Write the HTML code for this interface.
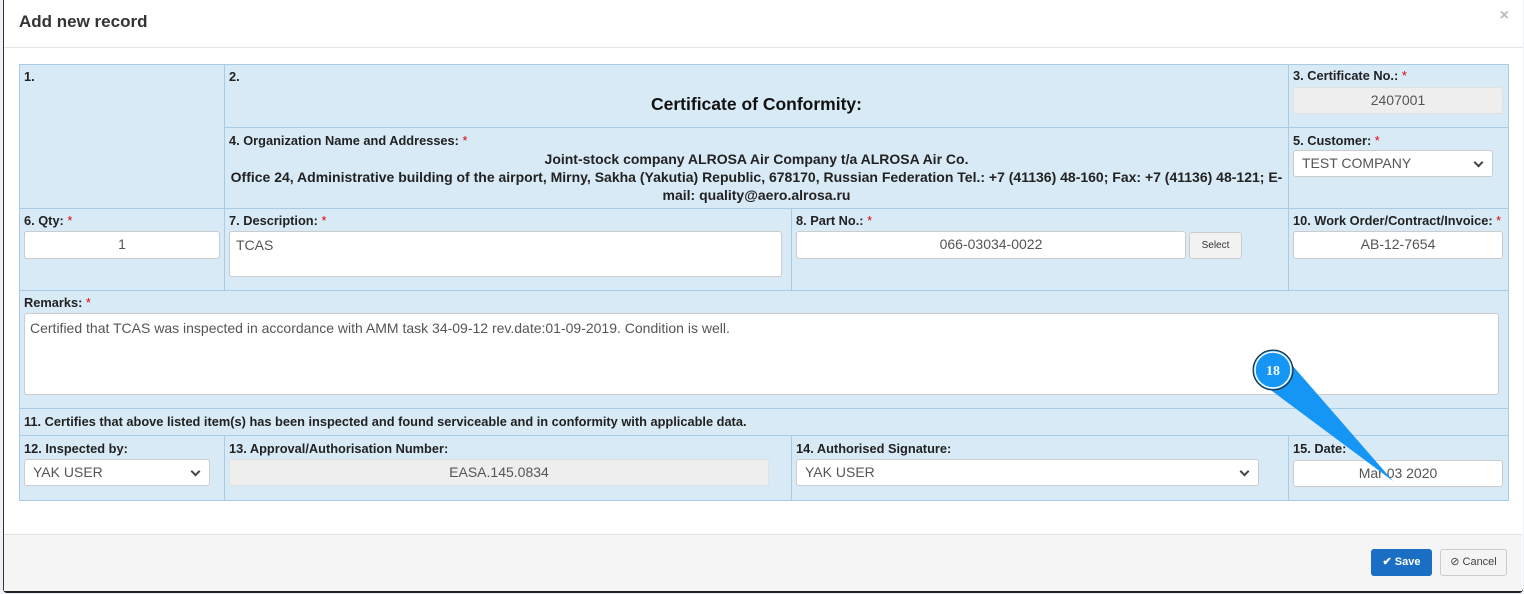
<!DOCTYPE html><html><head><style>
body{margin:0;width:1524px;height:594px;background:#eef1f5;font-family:"Liberation Sans",sans-serif;position:relative;overflow:hidden}
.m{position:absolute;left:3px;top:0;width:1519px;height:591px;background:#fff;border-left:1px solid #333;border-bottom:2px solid #222;border-radius:0 0 4px 4px}
.a{position:absolute}
.c{position:absolute;background:#d9eaf7;border:1px solid #a8cbe6;box-sizing:border-box}
.l{position:absolute;font-size:12.8px;font-weight:bold;color:#222}
.r{color:#d00;font-weight:normal}
.in{position:absolute;background:#fff;border:1px solid #ccc;border-radius:3px;box-sizing:border-box;font-size:14px;color:#555;line-height:25px}
.ctr{text-align:center}
.dis{background:#eee;border-color:#e0e0e0}
.sel{padding-left:8px}
.sel:after{content:"";position:absolute;right:10px;top:8px;width:5px;height:5px;border-right:2px solid #444;border-bottom:2px solid #444;transform:rotate(45deg)}
</style></head><body>
<div class="m">
<div class="a" style="left:15px;top:12px;font-size:17px;font-weight:bold;color:#333">Add new record</div>
<div class="a" style="right:14px;top:7px;font-size:16px;color:#bbb;font-weight:bold">×</div>
<div class="a" style="left:0;top:47px;width:1519px;border-top:1px solid #e5e5e5"></div>
</div>
<div class="c" style="left:19px;top:64px;width:206px;height:145px"></div><div class="l" style="left:24px;top:69px">1.</div>
<div class="c" style="left:224px;top:64px;width:1065px;height:64px"></div><div class="l" style="left:229px;top:69px">2.</div>
<div class="a" style="left:224px;top:94px;width:1065px;text-align:center;font-size:17.5px;font-weight:bold;color:#111">Certificate of Conformity:</div>
<div class="c" style="left:1288px;top:64px;width:221px;height:64px"></div><div class="l" style="left:1293px;top:68px">3. Certificate No.: <span class="r">*</span></div>
<div class="in ctr dis" style="left:1293px;top:87px;width:210px;height:27px">2407001</div>
<div class="c" style="left:224px;top:127px;width:1065px;height:82px"></div><div class="l" style="left:229px;top:133px">4. Organization Name and Addresses: <span class="r">*</span></div>
<div class="a" style="left:226px;top:150px;width:1061px;text-align:center;font-size:14px;font-weight:bold;color:#222;line-height:18px">Joint-stock company ALROSA Air Company t/a ALROSA Air Co.<br>Office 24, Administrative building of the airport, Mirny, Sakha (Yakutia) Republic, 678170, Russian Federation Tel.: +7 (41136) 48-160; Fax: +7 (41136) 48-121; E-<br>mail: quality@aero.alrosa.ru</div>
<div class="c" style="left:1288px;top:127px;width:221px;height:82px"></div><div class="l" style="left:1293px;top:133px">5. Customer: <span class="r">*</span></div>
<div class="in sel" style="left:1293px;top:150px;width:200px;height:27px">TEST COMPANY</div>
<div class="c" style="left:19px;top:208px;width:206px;height:83px"></div><div class="l" style="left:24px;top:213px">6. Qty: <span class="r">*</span></div>
<div class="in ctr" style="left:24px;top:231px;width:196px;height:28px">1</div>
<div class="c" style="left:224px;top:208px;width:568px;height:83px"></div><div class="l" style="left:229px;top:213px">7. Description: <span class="r">*</span></div>
<div class="in" style="left:229px;top:231px;width:553px;height:46px;padding-left:6px;line-height:26px">TCAS</div>
<div class="c" style="left:791px;top:208px;width:498px;height:83px"></div><div class="l" style="left:796px;top:213px">8. Part No.: <span class="r">*</span></div>
<div class="in ctr" style="left:796px;top:231px;width:390px;height:28px">066-03034-0022</div>
<div class="in ctr" style="left:1189px;top:232px;width:53px;height:27px;font-size:10px;background:#f2f2f2;color:#333">Select</div>
<div class="c" style="left:1288px;top:208px;width:221px;height:83px"></div><div class="l" style="left:1293px;top:213px">10. Work Order/Contract/Invoice: <span class="r">*</span></div>
<div class="in ctr" style="left:1293px;top:231px;width:210px;height:28px">AB-12-7654</div>
<div class="c" style="left:19px;top:290px;width:1490px;height:119px"></div><div class="l" style="left:24px;top:295px">Remarks: <span class="r">*</span></div>
<div class="in" style="left:24px;top:313px;width:1475px;height:82px;padding-left:5px;line-height:28px">Certified that TCAS was inspected in accordance with AMM task 34-09-12 rev.date:01-09-2019. Condition is well.</div>
<div class="c" style="left:19px;top:408px;width:1490px;height:28px"></div><div class="l" style="left:24px;top:414px">11. Certifies that above listed item(s) has been inspected and found serviceable and in conformity with applicable data.</div>
<div class="c" style="left:19px;top:435px;width:206px;height:66px"></div><div class="l" style="left:24px;top:441px">12. Inspected by:</div>
<div class="in sel" style="left:24px;top:459px;width:186px;height:27px">YAK USER</div>
<div class="c" style="left:224px;top:435px;width:568px;height:66px"></div><div class="l" style="left:229px;top:441px">13. Approval/Authorisation Number:</div>
<div class="in ctr dis" style="left:229px;top:459px;width:540px;height:27px">EASA.145.0834</div>
<div class="c" style="left:791px;top:435px;width:498px;height:66px"></div><div class="l" style="left:796px;top:441px">14. Authorised Signature:</div>
<div class="in sel" style="left:796px;top:459px;width:463px;height:27px">YAK USER</div>
<div class="c" style="left:1288px;top:435px;width:221px;height:66px"></div><div class="l" style="left:1293px;top:441px">15. Date:</div>
<div class="in ctr" style="left:1293px;top:460px;width:210px;height:27px">Mar 03 2020</div>
<div class="a" style="left:4px;top:534px;width:1518px;height:56px;background:#f5f5f5;border-top:1px solid #e0e0e0"></div>
<div class="a" style="left:1371px;top:549px;width:61px;height:27px;background:#1a6fc4;border-radius:3px;color:#fff;font-size:11px;font-weight:bold;line-height:27px;text-align:center">✔ Save</div>
<div class="a" style="left:1440px;top:549px;width:67px;height:27px;background:#f4f4f4;border:1px solid #ccc;box-sizing:border-box;border-radius:3px;color:#444;font-size:11px;line-height:25px;text-align:center">⊘ Cancel</div>
<svg class="a" style="left:0;top:0" width="1524" height="594">
<polygon points="1264,385 1292,365 1393,481" fill="#1596f5"/>
<circle cx="1273" cy="370" r="20" fill="#1596f5" stroke="#222" stroke-width="1"/>
<circle cx="1273" cy="370" r="18" fill="none" stroke="#fff" stroke-width="1.5"/>
<text x="1273" y="375" fill="#fff" font-family="Liberation Serif,serif" font-weight="bold" font-size="14" text-anchor="middle">18</text>
</svg>
</body></html>
